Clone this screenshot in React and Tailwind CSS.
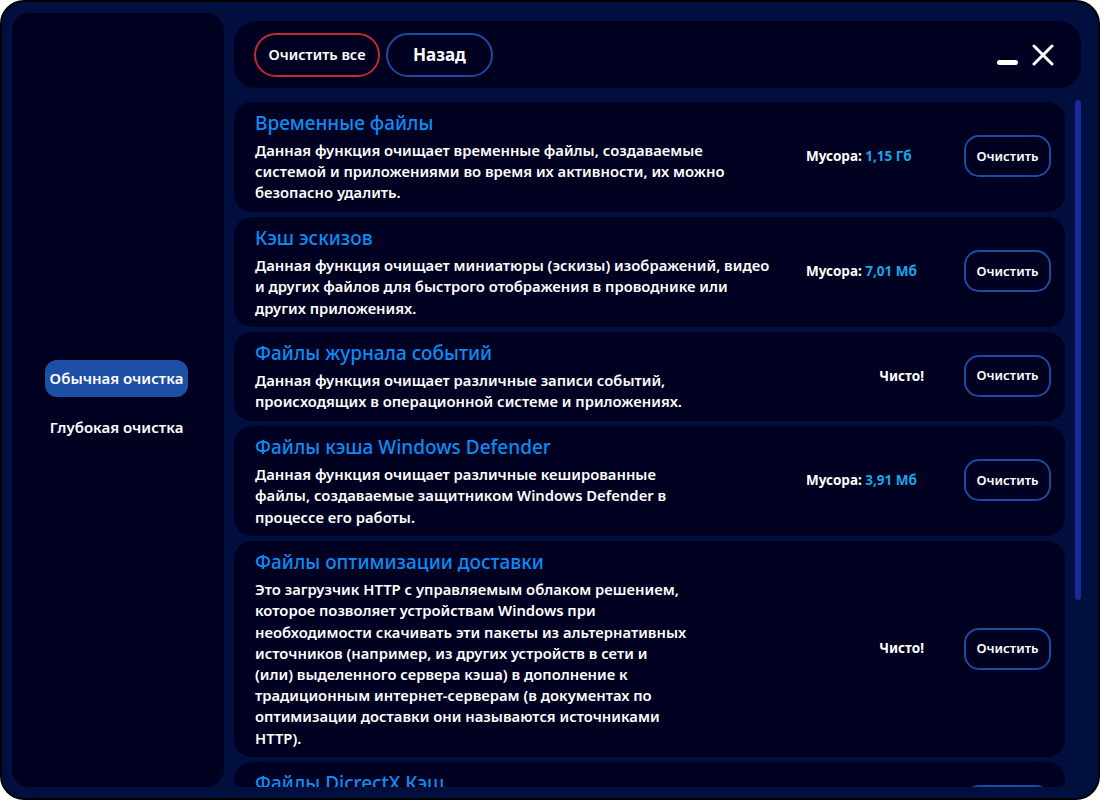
import React, { useState } from 'react';

const ITEMS = [
    {
        title: 'Временные файлы',
        lines: [
            'Данная функция очищает временные файлы, создаваемые',
            'системой и приложениями во время их активности, их можно',
            'безопасно удалить.',
        ],
        size: '1,15 Гб',
    },
    {
        title: 'Кэш эскизов',
        lines: [
            'Данная функция очищает миниатюры (эскизы) изображений, видео',
            'и других файлов для быстрого отображения в проводнике или',
            'других приложениях.',
        ],
        size: '7,01 Мб',
    },
    {
        title: 'Файлы журнала событий',
        lines: [
            'Данная функция очищает различные записи событий,',
            'происходящих в операционной системе и приложениях.',
        ],
        size: null,
    },
    {
        title: 'Файлы кэша Windows Defender',
        lines: [
            'Данная функция очищает различные кешированные',
            'файлы, создаваемые защитником Windows Defender в',
            'процессе его работы.',
        ],
        size: '3,91 Мб',
    },
    {
        title: 'Файлы оптимизации доставки',
        lines: [
            'Это загрузчик HTTP с управляемым облаком решением,',
            'которое позволяет устройствам Windows при',
            'необходимости скачивать эти пакеты из альтернативных',
            'источников (например, из других устройств в сети и',
            '(или) выделенного сервера кэша) в дополнение к',
            'традиционным интернет-серверам (в документах по',
            'оптимизации доставки они называются источниками',
            'HTTP).',
        ],
        size: null,
    },
    {
        title: 'Файлы DicrectX Кэш',
        lines: [
            'Данная функция очищает кэш шейдеров DirectX, который',
            'создается графической подсистемой при запуске игр.',
        ],
        size: null,
    },
];

const CleanCard = ({ item }) => (
    <div className="bg-[#000021] rounded-[18px] pl-[21px] pr-[14px] pt-[7px] pb-[8px] flex items-center shrink-0">
        <div className="flex-1 min-w-0">
            <h3 className="text-[19px] leading-[28px] text-[#0a8df2] font-medium">{item.title}</h3>
            <p className="mt-[3px] text-[14.8px] leading-[21.2px] font-semibold text-white whitespace-nowrap">
                {item.lines.map((l, i) => (
                    <span key={i} className="block">{l}</span>
                ))}
            </p>
        </div>
        <div className="w-[118px] text-[13.5px] font-bold text-white">
            {item.size ? (
                <span>Мусора: <span className="text-[#1aa6e4]">{item.size}</span></span>
            ) : (
                <span className="block text-right">Чисто!</span>
            )}
        </div>
        <button className="ml-[40px] w-[87px] h-[42px] rounded-[15px] border-2 border-[#1c4a9e] text-white text-[13px] font-semibold">
            Очистить
        </button>
    </div>
);

export default function App() {
    const [mode, setMode] = useState('normal');

    return (
        <div className="w-[1100px] h-[800px] bg-white" style={{ fontFamily: '"Noto Sans", "Open Sans", sans-serif' }}>
            <div className="w-full h-full rounded-[24px] border-2 border-black bg-[#000f3e] flex gap-[10px] pl-[10px] pr-[17px] pt-[11px] pb-[11px] overflow-hidden">
                {/* sidebar */}
                <aside className="w-[212px] h-full bg-[#000021] rounded-[18px] flex flex-col items-center justify-center gap-[12px] pt-[6px] pr-[3px]">
                    <button
                        onClick={() => setMode('normal')}
                        className={`w-[143px] h-[37px] rounded-[12px] text-[15px] font-semibold text-white ${mode === 'normal' ? 'bg-[#1d4fa6]' : ''}`}
                    >
                        Обычная очистка
                    </button>
                    <button
                        onClick={() => setMode('deep')}
                        className={`w-[143px] h-[37px] rounded-[12px] text-[15px] font-semibold text-white ${mode === 'deep' ? 'bg-[#1d4fa6]' : ''}`}
                    >
                        Глубокая очистка
                    </button>
                </aside>

                {/* main */}
                <main className="flex-1 min-w-0 flex flex-col pt-[8px]">
                    <div className="h-[67px] shrink-0 bg-[#000021] rounded-[22px] flex items-center pl-[20px] pr-[27px]">
                        <button className="w-[126px] h-[44px] rounded-[22px] border-2 border-[#c42a30] text-white text-[14.5px] font-semibold">
                            Очистить все
                        </button>
                        <button className="ml-[6px] w-[107px] h-[44px] rounded-[22px] border-2 border-[#1c4a9e] text-white text-[17px] font-bold">
                            Назад
                        </button>
                        <div className="ml-auto flex items-center gap-[14px]">
                            <button className="w-[22px] h-[22px] flex items-end justify-center pb-[1px]">
                                <span className="block w-[21px] h-[5px] rounded-full bg-white"></span>
                            </button>
                            <button className="w-[22px] h-[22px]">
                                <svg viewBox="0 0 22 22" width="22" height="22">
                                    <path d="M2 2 L20 20 M20 2 L2 20" stroke="white" strokeWidth="3" strokeLinecap="round" />
                                </svg>
                            </button>
                        </div>
                    </div>

                    <div className="flex-1 min-h-0 mt-[12px] flex gap-[10px] overflow-hidden">
                        <div className="flex-1 min-w-0 flex flex-col gap-[5.5px] pt-[2px] overflow-hidden rounded-b-[6px]">
                            {ITEMS.map((item, i) => (
                                <CleanCard key={i} item={item} />
                            ))}
                        </div>
                        <div className="w-[6px] shrink-0">
                            <div className="w-[6px] h-[500px] rounded-full bg-[#1a2a9c]"></div>
                        </div>
                    </div>
                </main>
            </div>
        </div>
    );
}
